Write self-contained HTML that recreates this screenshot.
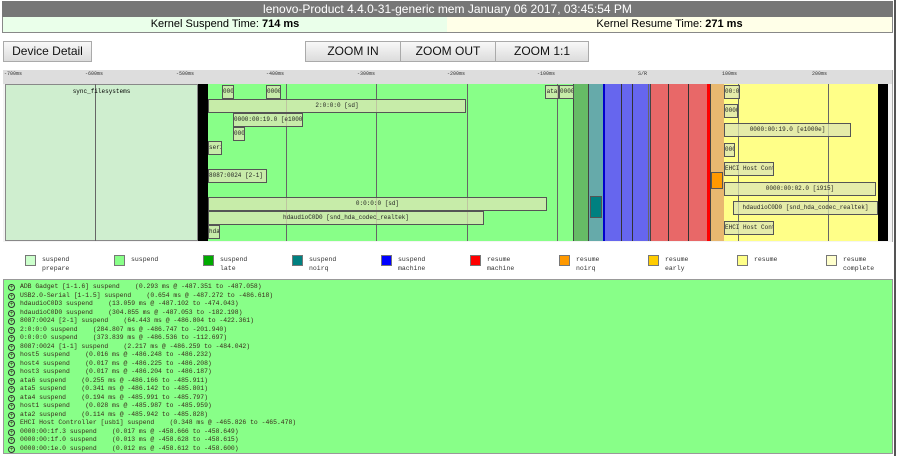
<!DOCTYPE html><html><head><style>
*{margin:0;padding:0;box-sizing:border-box}
body{width:900px;height:456px;background:#fff;position:relative;overflow:hidden;font-family:"Liberation Sans",sans-serif}
.a{position:absolute}
.btn{position:absolute;top:41px;height:21px;background:linear-gradient(#f8f8f8,#dcdcdc);border:1px solid #aaa;font-size:12px;text-align:center;line-height:19px;color:#111}
.d{position:absolute;background:rgba(220,230,180,0.75);border:1px solid #555;font-family:"Liberation Mono",monospace;font-size:6px;line-height:12px;height:14px;overflow:hidden;white-space:nowrap;text-align:center;color:#222}
.v{position:absolute;top:84px;height:157px;width:1px;background:#666}
.t{position:absolute;top:71px;font-family:"Liberation Mono",monospace;font-size:5px;color:#333}
.lg{position:absolute;top:255px;width:11px;height:11px;border:1px solid #777}
.lt{position:absolute;top:255px;font-family:"Liberation Mono",monospace;font-size:6.5px;line-height:9px;color:#333}
.list{position:absolute;left:3px;top:279px;width:890px;height:175px;background:#88ff88;border:1px solid #999;font-family:"Liberation Mono",monospace;font-size:6.4px;line-height:8.5px;color:#3a2a1a;padding:3px 0 0 4px;white-space:pre}
.list i{display:inline-block;width:7px;height:7px;border:1px solid #333;border-radius:50%;margin-right:5px;vertical-align:-1px;font-style:normal;font-size:6px;line-height:5px;text-align:center}
</style></head><body>
<div class="a" style="left:2px;top:1px;width:891px;height:16px;background:#777;color:#fff;font-size:12px;text-align:center;line-height:16px">lenovo-Product 4.4.0-31-generic mem January 06 2017, 03:45:54 PM</div>
<div class="a" style="left:2px;top:17px;width:891px;height:16px;border:1px solid #888;border-top:0"></div>
<div class="a" style="left:3px;top:17px;width:444px;height:15px;background:#eaffea;font-size:11px;text-align:center;line-height:15px">Kernel Suspend Time: <b>714 ms</b></div>
<div class="a" style="left:447px;top:17px;width:445px;height:15px;background:#ffffe8;font-size:11px;text-align:center;line-height:15px">Kernel Resume Time: <b>271 ms</b></div>
<div class="btn" style="left:3px;width:89px">Device Detail</div>
<div class="btn" style="left:305px;width:96px">ZOOM IN</div>
<div class="btn" style="left:400px;width:96px">ZOOM OUT</div>
<div class="btn" style="left:495px;width:94px">ZOOM 1:1</div>
<div class="a" style="left:3px;top:70px;width:889px;height:14px;background:#ddd"></div>
<div class="a" style="left:3px;top:84px;width:889px;height:158px;background:#f4f4f4"></div>
<div class="a" style="left:5px;top:84px;width:193px;height:157px;background:#cfeecf;border:1px solid #888"></div>
<div class="a" style="left:198px;top:84px;width:10px;height:157px;background:#000"></div>
<div class="a" style="left:208px;top:84px;width:365px;height:157px;background:#88ff88"></div>
<div class="a" style="left:573px;top:84px;width:15px;height:157px;background:#66bb66;border-left:1px solid #444"></div>
<div class="a" style="left:588px;top:84px;width:15px;height:157px;background:#66aaaa;border-left:1px solid #444"></div>
<div class="a" style="left:603px;top:84px;width:47px;height:157px;background:#6666ee;border-left:2px solid #00c"></div>
<div class="a" style="left:650px;top:84px;width:58px;height:157px;background:#e86868;border-left:1px solid #444"></div>
<div class="a" style="left:707px;top:84px;width:3px;height:157px;background:#f00"></div>
<div class="a" style="left:710px;top:84px;width:14px;height:157px;background:#e8b870;border-left:1px solid #444"></div>
<div class="a" style="left:724px;top:84px;width:154px;height:157px;background:#ffff88"></div>
<div class="a" style="left:878px;top:84px;width:10px;height:157px;background:#000"></div>
<div class="a" style="left:892px;top:70px;width:1px;height:172px;background:#aaa"></div>
<div class="v" style="left:95px"></div><div class="v" style="left:286px"></div><div class="v" style="left:376px"></div><div class="v" style="left:467px"></div><div class="v" style="left:557px"></div><div class="v" style="left:648px"></div><div class="v" style="left:738px"></div><div class="v" style="left:828px"></div>
<div class="v" style="left:621px;background:#333"></div><div class="v" style="left:632px;background:#333"></div><div class="v" style="left:668px;background:#333"></div><div class="v" style="left:688px;background:#333"></div>
<div class="t" style="left:4px">-700ms</div><div class="t" style="left:85px">-600ms</div><div class="t" style="left:176px">-500ms</div><div class="t" style="left:266px">-400ms</div><div class="t" style="left:357px">-300ms</div><div class="t" style="left:447px">-200ms</div><div class="t" style="left:537px">-100ms</div><div class="t" style="left:638px">S/R</div><div class="t" style="left:722px">100ms</div><div class="t" style="left:812px">200ms</div>
<div class="a" style="left:5px;top:88px;width:193px;font-family:'Liberation Mono',monospace;font-size:6px;text-align:center">sync_filesystems</div>
<div class="d" style="left:222px;top:85px;width:12px">000</div>
<div class="d" style="left:266px;top:85px;width:15px">0000</div>
<div class="d" style="left:545px;top:85px;width:14px">ata</div>
<div class="d" style="left:559px;top:85px;width:15px">0000</div>
<div class="d" style="left:208px;top:99px;width:258px">2:0:0:0 [sd]</div>
<div class="d" style="left:233px;top:113px;width:70px">0000:00:19.0 [e1000e]</div>
<div class="d" style="left:233px;top:127px;width:12px">000</div>
<div class="d" style="left:208px;top:141px;width:14px">seri</div>
<div class="d" style="left:208px;top:169px;width:59px">8087:0024 [2-1] [</div>
<div class="d" style="left:208px;top:197px;width:339px">0:0:0:0 [sd]</div>
<div class="d" style="left:208px;top:211px;width:276px">hdaudioC0D0 [snd_hda_codec_realtek]</div>
<div class="d" style="left:208px;top:225px;width:12px">hda</div>
<div class="d" style="left:724px;top:85px;width:16px">00:0</div>
<div class="d" style="left:724px;top:104px;width:14px">0000</div>
<div class="d" style="left:724px;top:123px;width:127px">0000:00:19.0 [e1000e]</div>
<div class="d" style="left:724px;top:143px;width:11px">000</div>
<div class="d" style="left:724px;top:162px;width:50px">EHCI Host Cont</div>
<div class="d" style="left:724px;top:182px;width:152px">0000:00:02.0 [i915]</div>
<div class="d" style="left:733px;top:201px;width:145px">hdaudioC0D0 [snd_hda_codec_realtek]</div>
<div class="d" style="left:724px;top:221px;width:50px">EHCI Host Cont</div>
<div class="a" style="left:711px;top:172px;width:12px;height:17px;background:#ff9900;border:1px solid #555"></div>
<div class="a" style="left:590px;top:196px;width:12px;height:22px;background:#008080;border:1px solid #555"></div>
<div class="lg" style="left:25px;background:#ccffcc"></div><div class="lt" style="left:42px">suspend<br>prepare</div>
<div class="lg" style="left:114px;background:#88ff88"></div><div class="lt" style="left:131px">suspend</div>
<div class="lg" style="left:203px;background:#00aa00"></div><div class="lt" style="left:220px">suspend<br>late</div>
<div class="lg" style="left:292px;background:#008080"></div><div class="lt" style="left:309px">suspend<br>noirq</div>
<div class="lg" style="left:381px;background:#0000ff"></div><div class="lt" style="left:398px">suspend<br>machine</div>
<div class="lg" style="left:470px;background:#ff0000"></div><div class="lt" style="left:487px">resume<br>machine</div>
<div class="lg" style="left:559px;background:#ff9900"></div><div class="lt" style="left:576px">resume<br>noirq</div>
<div class="lg" style="left:648px;background:#ffcc00"></div><div class="lt" style="left:665px">resume<br>early</div>
<div class="lg" style="left:737px;background:#ffff88"></div><div class="lt" style="left:754px">resume</div>
<div class="lg" style="left:826px;background:#ffffcc"></div><div class="lt" style="left:843px">resume<br>complete</div>
<div class="list"><i>+</i>ADB Gadget [1-1.6] suspend    (0.293 ms @ -487.351 to -487.058)
<i>+</i>USB2.0-Serial [1-1.5] suspend    (0.654 ms @ -487.272 to -486.618)
<i>+</i>hdaudioC0D3 suspend    (13.059 ms @ -487.102 to -474.043)
<i>+</i>hdaudioC0D0 suspend    (304.855 ms @ -487.053 to -182.198)
<i>+</i>8087:0024 [2-1] suspend    (64.443 ms @ -486.804 to -422.361)
<i>+</i>2:0:0:0 suspend    (284.807 ms @ -486.747 to -201.940)
<i>+</i>0:0:0:0 suspend    (373.839 ms @ -486.536 to -112.697)
<i>+</i>8087:0024 [1-1] suspend    (2.217 ms @ -486.259 to -484.042)
<i>+</i>host5 suspend    (0.016 ms @ -486.248 to -486.232)
<i>+</i>host4 suspend    (0.017 ms @ -486.225 to -486.208)
<i>+</i>host3 suspend    (0.017 ms @ -486.204 to -486.187)
<i>+</i>ata6 suspend    (0.255 ms @ -486.166 to -485.911)
<i>+</i>ata5 suspend    (0.341 ms @ -486.142 to -485.801)
<i>+</i>ata4 suspend    (0.194 ms @ -485.991 to -485.797)
<i>+</i>host1 suspend    (0.028 ms @ -485.987 to -485.959)
<i>+</i>ata2 suspend    (0.114 ms @ -485.942 to -485.828)
<i>+</i>EHCI Host Controller [usb1] suspend    (0.348 ms @ -465.826 to -465.478)
<i>+</i>0000:00:1f.3 suspend    (0.017 ms @ -458.666 to -458.649)
<i>+</i>0000:00:1f.0 suspend    (0.013 ms @ -458.628 to -458.615)
<i>+</i>0000:00:1e.0 suspend    (0.012 ms @ -458.612 to -458.600)</div>
<div class="a" style="left:894px;top:0;width:2px;height:456px;background:#555"></div>
</body></html>
